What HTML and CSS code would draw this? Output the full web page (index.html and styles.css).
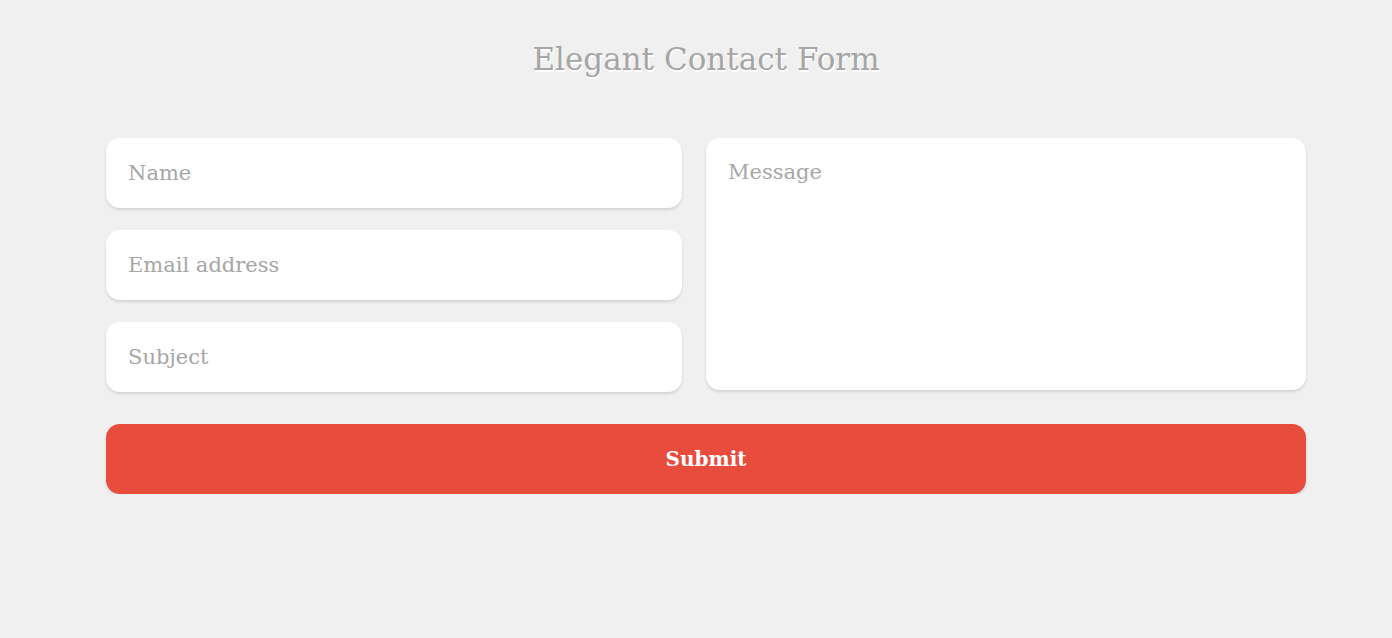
FILE: index.html
```html
<!DOCTYPE html>
<html>
<head>
	<title>Elegant Contact Form</title>
	<link rel="stylesheet" href="styles.css">
</head>
<body>
	<form class="contact" action="#">
		<h1>Elegant Contact Form</h1>

		<div class="fields">
			<div class="column">
				<input type="text" placeholder="Name">
				<input type="email" placeholder="Email address">
				<input type="text" placeholder="Subject">
			</div>
			<div class="column">
				<textarea placeholder="Message"></textarea>
			</div>
		</div>

		<button type="submit">Submit</button>
	</form>
</body>
</html>
```

FILE: styles.css
```css
body {
	margin: 0;
	padding: 0 0 0 20px;
	font-family: 'DejaVu Serif', 'Liberation Serif', serif;
	background-color: #f0f0f0;
}
.contact {
	width: 1200px;
	margin: 0 auto;
}
h1 {
	margin: 0;
	padding-top: 36px;
	padding-bottom: 56px;
	height: 46px;
	font-size: 31px;
	font-weight: normal;
	line-height: 46px;
	text-align: center;
	color: #a6a6a6;
	text-shadow: 1px 2px 0 white;
}
.fields {
	display: flex;
	gap: 24px;
}
.fields .column:first-child {
	display: flex;
	flex-direction: column;
	gap: 22px;
	width: 576px;
}
.fields .column:last-child {
	flex: 1;
}
input, textarea {
	display: block;
	box-sizing: border-box;
	width: 100%;
	padding: 0 22px;
	font-family: inherit;
	font-size: 21px;
	color: #666;
	background-color: white;
	border: 0;
	border-radius: 14px;
	box-shadow: 0 2px 3px rgba(0,0,0,.12);
	outline: none;
}
input {
	height: 70px;
}
textarea {
	height: 252px;
	padding-top: 22px;
	resize: none;
}
input::placeholder, textarea::placeholder {
	color: #a6a6a6;
}
button {
	display: block;
	width: 100%;
	height: 70px;
	margin-top: 32px;
	font-family: inherit;
	font-size: 20px;
	font-weight: bold;
	color: white;
	background-color: #e74c3c;
	border: 0;
	border-radius: 14px;
	box-shadow: 0 2px 3px rgba(0,0,0,.12);
	cursor: pointer;
}
```
